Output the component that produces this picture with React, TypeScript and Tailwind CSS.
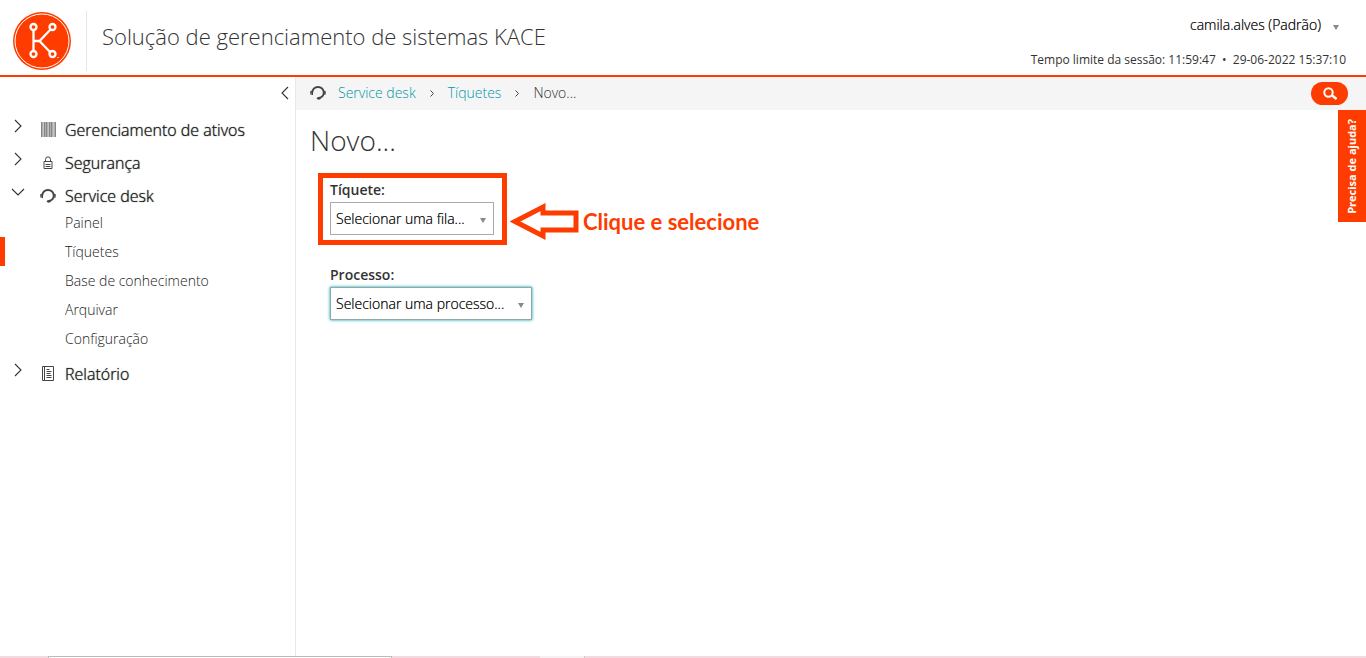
import React from "react";

function Chevron({ className }: { className: string }) {
  return (
    <svg viewBox="0 0 8 14" className={`h-[14px] w-2 ${className}`} fill="none" stroke="#333" strokeWidth="1.1" aria-hidden="true">
      <path d="M1 1l6 6-6 6" />
    </svg>
  );
}

function Headset() {
  return (
    <svg viewBox="0 0 16 14" className="h-[14px] w-4" fill="none" stroke="#444" aria-hidden="true">
      <path d="M2.300 6.500C2.300 3.200 4.800 1 8 1s5.700 2.200 5.700 5.500c0 3-1.700 4.900-4.700 5.500" strokeWidth="1.800" />
      <path d="M1 5v3.500M15 5v3.500" strokeWidth="1.400" />
      <path d="M2.300 4.800v4.200M13.700 4.800v4.200" strokeWidth="1.400" />
      <ellipse cx="8.800" cy="12.300" rx="1.900" ry="1.400" fill="#444" stroke="none" />
    </svg>
  );
}

function Barcode() {
  return (
    <svg viewBox="0 0 15 15" className="h-[15px] w-[15px]" aria-hidden="true">
      <rect width="15" height="15" fill="#b0b0b0" />
      <path d="M.5 0v15M3.500 0v15M5.500 0v15M8.500 0v15M10.500 0v15M14.500 0v15" stroke="#858585" strokeWidth="1" />
      <path d="M2.500 0v15M12.500 0v15M7.500 0v15" stroke="#d0d0d0" strokeWidth=".6" />
    </svg>
  );
}

function Lock() {
  return (
    <svg viewBox="0 0 10 13" className="h-[13px] w-[10px]" fill="none" stroke="#444" aria-hidden="true">
      <path d="M1 5.500h8v7H1zM2.500 5.500V3.500a2.500 2.700 0 0 1 5 0v2M2.500 8.500h5M2.500 10.500h5" />
    </svg>
  );
}

function Report() {
  return (
    <svg viewBox="0 0 12 15" className="h-[15px] w-3" fill="none" stroke="#444" aria-hidden="true">
      <path d="M.5.5h11v14H.5zM2.500.5v14M4.500 3.500h3M4.500 5.500h5M4.500 7.500h4M4.500 9.500h5M4.500 11.500h5" />
    </svg>
  );
}

function Caret() {
  return (
    <svg viewBox="0 0 6 5" className="h-[5px] w-[6px]" fill="#888" aria-hidden="true">
      <path d="M0 0h6L3 5z" />
    </svg>
  );
}

function Logo() {
  return (
    <svg viewBox="0 0 58 58" className="h-[58px] w-[58px]" fill="none" role="img" aria-label="KACE">
      <circle cx="29" cy="29" r="29" fill="#ff3c00" />
      <circle cx="29" cy="29" r="27" stroke="#fff" strokeWidth="1" />
      <g stroke="#fff" strokeWidth="2.300">
        <path d="M20.500 18v21M20.500 29h6l11-11.500M26.500 29L37 40" />
        <circle cx="20.500" cy="15" r="3" />
        <circle cx="39.500" cy="15" r="3" />
        <circle cx="20.500" cy="42" r="3" />
        <circle cx="39.500" cy="42" r="3" />
      </g>
      <path d="M44 45.500h2" stroke="#ffb199" />
    </svg>
  );
}

function Section({ icon, label, open, children }: { icon: React.ReactNode; label: string; open?: boolean; children?: React.ReactNode }) {
  return (
    <li>
      <button type="button" aria-expanded={!!open} className="flex h-[33px] w-full items-center text-left">
        <span className="flex w-9 justify-center pb-2">
          <Chevron className={open ? "rotate-90" : ""} />
        </span>
        <span className="flex w-6 justify-center">{icon}</span>
        <span className="pl-[5px] text-base font-light text-[#222] [text-shadow:0_0_1px_#222]">{label}</span>
      </button>
      {children}
    </li>
  );
}

const pages = ["Painel", "Tíquetes", "Base de conhecimento", "Arquivar", "Configuração"];

function Field({ id, label, option, widthClass, frameClass }: { id: string; label: string; option: string; widthClass: string; frameClass: string }) {
  return (
    <div className="flex flex-col items-start">
      <label htmlFor={id} className="text-sm leading-6 font-semibold text-[#333]">{label}</label>
      <div className={`relative ${widthClass}`}>
        <select id={id} className={`block h-[33px] w-full appearance-none border bg-white pr-5 pl-[5px] text-sm font-light text-[#222] outline-none [text-shadow:0_0_0_#222] ${frameClass}`}>
          <option>{option}</option>
        </select>
        <span className="pointer-events-none absolute inset-y-0 right-2 flex items-center pt-[3px]">
          <Caret />
        </span>
      </div>
    </div>
  );
}

export default function App() {
  return (
    <div className="flex min-h-screen flex-col bg-white font-['Open_Sans',sans-serif] text-[#333]">
      <header className="flex h-[77px] items-center justify-between border-b-2 border-[#ff3c00] pr-5 pl-[13px]">
        <div className="flex items-center pt-[6px]">
          <Logo />
          <div className="ml-[15px] flex h-[60px] items-center border-l border-[#e5e5e5] pb-2 pl-[15px]">
            <h1 className="text-[22px] font-light">Solução de gerenciamento de sistemas KACE</h1>
          </div>
        </div>
        <div className="flex flex-col items-end gap-[17px] pt-[7px]">
          <button type="button" className="flex items-center gap-3 pr-[7px] text-sm leading-5 font-light text-[#222] [text-shadow:0_0_0_#222]">
            camila.alves (Padrão)
            <span className="pt-[6px]"><Caret /></span>
          </button>
          <p className="text-xs leading-4">Tempo limite da sessão: 11:59:47&nbsp; • &nbsp;29-06-2022 15:37:10</p>
        </div>
      </header>

      <div className="flex flex-1">
        <nav className="w-[296px] shrink-0 border-r border-[#e8e8e8]">
          <div className="flex h-9 justify-end pt-[9px] pr-[6px]">
            <button type="button" aria-label="Recolher menu" className="h-[14px]">
              <Chevron className="rotate-180" />
            </button>
          </div>
          <ul>
            <Section icon={<Barcode />} label="Gerenciamento de ativos" />
            <Section icon={<Lock />} label="Segurança" />
            <Section icon={<Headset />} label="Service desk" open>
              <ul className="-mt-1 mb-1">
                {pages.map((page) => (
                  <li key={page}>
                    <a
                      href="#"
                      className={`flex h-[29px] items-center border-l-[5px] pl-[60px] text-sm font-light text-[#222] ${page === "Tíquetes" ? "border-[#ff3c00]" : "border-transparent"}`}
                    >
                      {page}
                    </a>
                  </li>
                ))}
              </ul>
            </Section>
            <Section icon={<Report />} label="Relatório" />
          </ul>
        </nav>

        <div className="relative flex-1">
          <div className="flex h-[33px] items-center justify-between bg-[#f5f5f5] pr-[18px] pl-[14px]">
            <ol className="flex items-center pb-px text-sm font-light">
              <li className="flex items-center gap-3">
                <Headset />
                <a href="#" className="text-[#0097a7]">Service desk</a>
              </li>
              <li className="flex items-center">
                <svg viewBox="0 0 4 7" className="mx-[14px] h-[7px] w-1" fill="none" stroke="#444" aria-hidden="true"><path d="M.5.5l3 3-3 3" /></svg>
                <a href="#" className="text-[#0097a7]">Tíquetes</a>
              </li>
              <li className="flex items-center">
                <svg viewBox="0 0 4 7" className="mx-[14px] h-[7px] w-1" fill="none" stroke="#444" aria-hidden="true"><path d="M.5.5l3 3-3 3" /></svg>
                Novo...
              </li>
            </ol>
            <button type="button" aria-label="Pesquisar" className="flex h-[23px] w-[37px] items-center justify-center rounded-full bg-[#ff3c00]">
              <svg viewBox="0 0 14 13" className="h-[13px] w-[14px]" fill="none" stroke="#fff" strokeWidth="2" aria-hidden="true">
                <circle cx="5.500" cy="5.500" r="4.200" />
                <path d="M8.500 8l5 4" strokeWidth="2.400" />
              </svg>
            </button>
          </div>

          <main className="px-[14px]">
            <h2 className="pt-[10px] text-[28px] leading-10 font-light">Novo...</h2>
            <div className="mt-[13px] ml-2 flex items-center">
              <div className="border-[5px] border-[#ff3c00] pr-2 pb-[5px] pl-[7px]">
                <Field id="tiquete" label="Tíquete:" option="Selecionar uma fila..." widthClass="w-[164px]" frameClass="border-[#aaa]" />
              </div>
              <div className="ml-[3px] flex items-center gap-1 pt-[25px]">
                <svg viewBox="0 0 69 39" className="h-[39px] w-[69px]" fill="none" stroke="#ff3c00" strokeWidth="5" aria-hidden="true">
                  <path d="M5 19.500L33 5v6h33v17H33v6z" />
                </svg>
                <p className="font-['Lato',sans-serif] text-[22px] leading-7 font-bold text-[#ff3c00]">Clique e selecione</p>
              </div>
            </div>
            <div className="mt-[18px] ml-5">
              <Field
                id="processo"
                label="Processo:"
                option="Selecionar uma processo..."
                widthClass="w-[202px]"
                frameClass="border-[#8fa9ab] shadow-[0_0_3px_#00a0af]"
              />
            </div>
          </main>

          <button type="button" className="absolute top-[33px] right-0 flex h-[112px] w-7 items-center justify-center bg-[#ff3c00] text-[11px] font-bold text-white">
            <span className="rotate-180 whitespace-nowrap [writing-mode:vertical-rl]">Precisa de ajuda?</span>
          </button>
        </div>
      </div>

      <div className="flex h-[2px] bg-[#f3d9e0]" aria-hidden="true">
        <div className="ml-12 w-[344px] border-x border-t border-[#bbb] bg-white" />
        <div className="ml-[148px] w-[45px] border-r border-[#ccc] bg-[#f8eff2]" />
      </div>
    </div>
  );
}
